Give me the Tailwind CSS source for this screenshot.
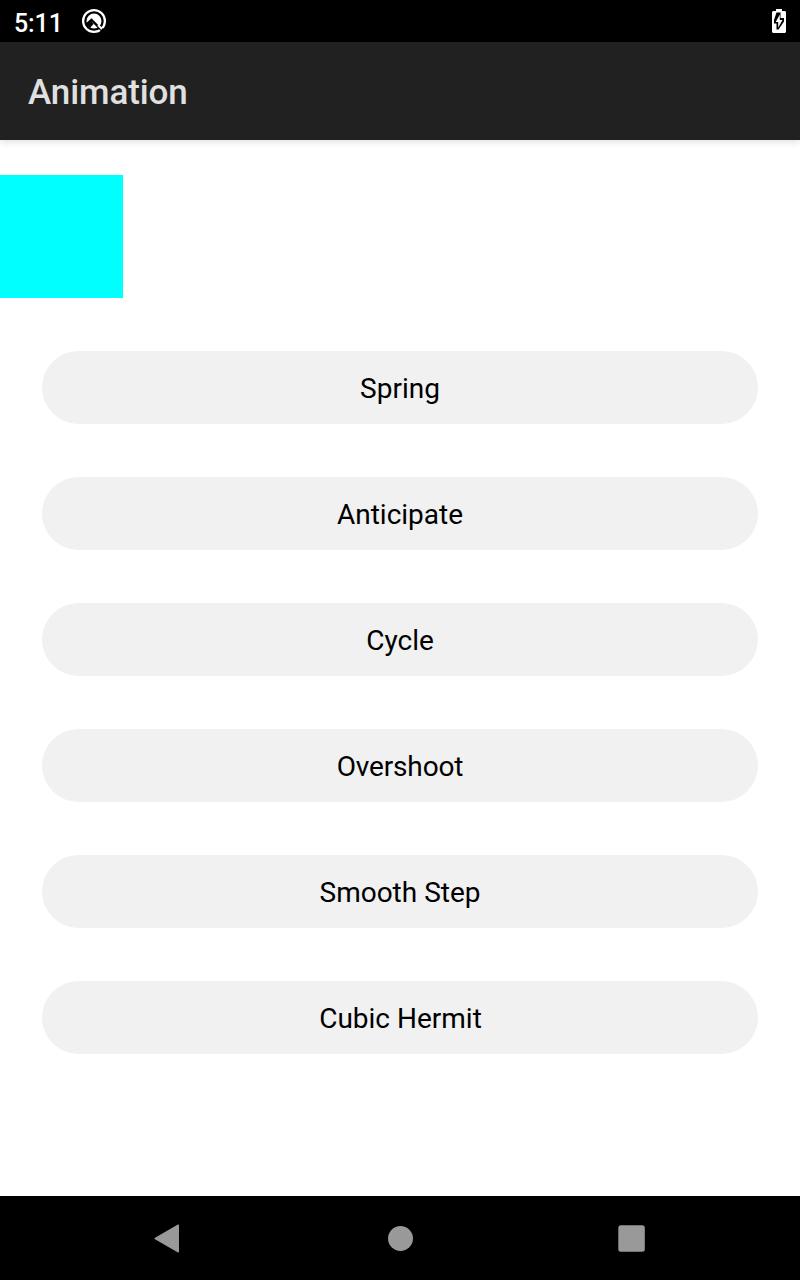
<!DOCTYPE html>
<html lang="en"><head><meta charset="utf-8"><title>Animation</title>
<script src="https://cdn.jsdelivr.net/npm/@tailwindcss/browser@4"></script></head>
<body class="bg-white font-['Roboto',sans-serif]">
<div class="flex h-[1280px] w-[800px] flex-col overflow-hidden">
<div class="flex h-[42px] shrink-0 items-center bg-black pl-[14px] pr-[14px] text-white">
<span class="pt-[4px] text-[25px] leading-none font-medium tracking-[-0.1px]">5:11</span>
<svg class="ml-[18px]" width="26" height="26" viewBox="0 0 26 26" fill="none"><circle cx="13" cy="13" r="10.900" stroke="white" stroke-width="2.300"/><circle cx="13" cy="13" r="7.500" fill="white"/><path d="M5 17L10.500 12L20 21.500" stroke="black" stroke-width="2.400"/><path d="M6 17l4.500-3.500L12.500 16L9 20z" fill="black"/><path d="M19 23l2-3 3 1-2 4z" fill="black"/><path d="M17 17l4 4" stroke="white" stroke-width="2"/></svg>
<svg class="ml-auto" width="14" height="24" viewBox="0 0 14 24"><path fill="white" d="M4 0h6v2h3l1 1v20l-1 1H1l-1-1V3l1-1h3z"/><path d="M8.500 3.500H4.500L2 11V14.500H4.500V20.500H6.500L12 12.500V9H8.500Z" fill="black"/><path d="M7.800 5.500L3.700 13H6.200V18.500L10.500 11H7.800Z" fill="white"/></svg>
</div>
<header class="z-10 flex h-[98px] shrink-0 items-center bg-[#212121] pl-7 shadow-[0_2px_7px_rgba(0,0,0,0.13)]"><h1 class="pt-[3px] text-[35px] leading-none font-medium tracking-[-0.1px] text-[#e0e0e0]">Animation</h1></header>
<main class="flex grow flex-col pt-[35px]">
<div class="size-[123px] bg-[#00ffff]"></div>
<div class="mt-[53px] flex flex-col gap-[53px] px-[42px] text-[28px] leading-none text-black">
<button class="h-[73px] rounded-full bg-[#f1f1f1] pt-[2px]">Spring</button>
<button class="h-[73px] rounded-full bg-[#f1f1f1] pt-[2px]">Anticipate</button>
<button class="h-[73px] rounded-full bg-[#f1f1f1] pt-[2px]">Cycle</button>
<button class="h-[73px] rounded-full bg-[#f1f1f1] pt-[2px] tracking-[-0.15px]">Overshoot</button>
<button class="h-[73px] rounded-full bg-[#f1f1f1] pt-[2px]">Smooth Step</button>
<button class="h-[73px] rounded-full bg-[#f1f1f1] pt-[2px] pl-[1px]">Cubic Hermit</button>
</div></main>
<nav class="h-[84px] shrink-0 bg-black"><svg width="800" height="84" fill="#999"><path d="M178 29.500L155.500 42.500L178 55.500Z" stroke="#999" stroke-width="2" stroke-linejoin="round"/><circle cx="400.500" cy="42.500" r="12.500"/><rect x="618.300" y="29.300" width="26.500" height="26.500" rx="2.500"/></svg></nav>
</div></body></html>
